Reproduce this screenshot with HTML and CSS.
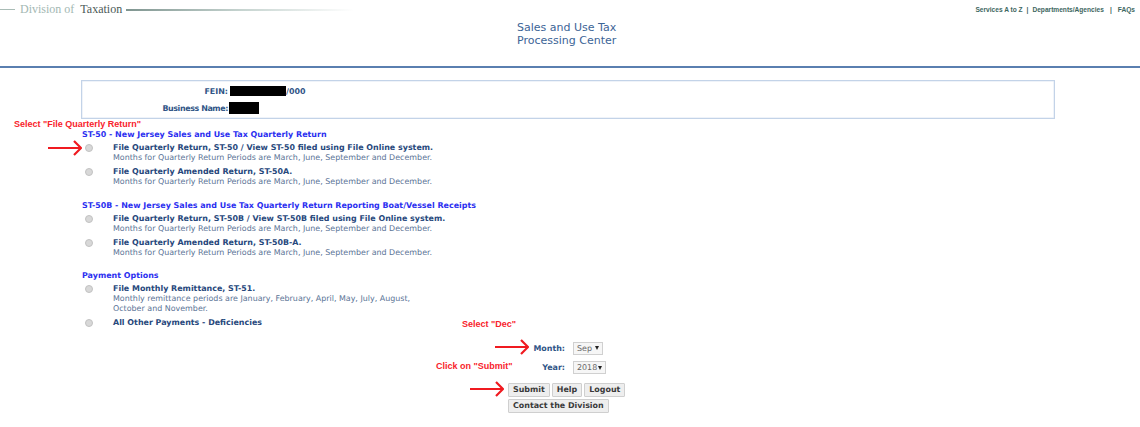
FILE: index.html
```html
<!DOCTYPE html>
<html lang="en">
<head>
<meta charset="utf-8">
<title>Sales and Use Tax Processing Center</title>
<link rel="stylesheet" href="styles.css">
</head>
<body>
<header class="site-header">
  <div class="logo">
    <span class="logo-dash"></span>
    <span class="logo-light">Division of</span>
    <span class="logo-dark">Taxation</span>
    <span class="logo-rule"></span>
  </div>
  <div class="app-title">Sales and Use Tax<br>Processing Center</div>
  <nav class="top-links">
    <span>Services A to Z</span><span class="sep-a">|</span><span>Departments/Agencies</span><span class="sep-b">|</span><span>FAQs</span>
  </nav>
</header>

<main class="page">
  <section class="identity">
    <div class="id-row id-row-fein"><span class="id-label">FEIN:</span><span class="redact redact-fein"></span><span class="id-value">/000</span></div>
    <div class="id-row"><span class="id-label id-label-name">Business Name:</span><span class="redact redact-name"></span></div>
  </section>

  <section class="group group-first">
    <h2>ST-50 - New Jersey Sales and Use Tax Quarterly Return</h2>
    <div class="option"><span class="radio"></span><div><strong>File Quarterly Return, ST-50 / View ST-50 filed using File Online system.</strong><p>Months for Quarterly Return Periods are March, June, September and December.</p></div></div>
    <div class="option"><span class="radio"></span><div><strong>File Quarterly Amended Return, ST-50A.</strong><p>Months for Quarterly Return Periods are March, June, September and December.</p></div></div>
  </section>

  <section class="group">
    <h2>ST-50B - New Jersey Sales and Use Tax Quarterly Return Reporting Boat/Vessel Receipts</h2>
    <div class="option"><span class="radio"></span><div><strong>File Quarterly Return, ST-50B / View ST-50B filed using File Online system.</strong><p>Months for Quarterly Return Periods are March, June, September and December.</p></div></div>
    <div class="option"><span class="radio"></span><div><strong>File Quarterly Amended Return, ST-50B-A.</strong><p>Months for Quarterly Return Periods are March, June, September and December.</p></div></div>
  </section>

  <section class="group">
    <h2>Payment Options</h2>
    <div class="option"><span class="radio"></span><div><strong>File Monthly Remittance, ST-51.</strong><p>Monthly remittance periods are January, February, April, May, July, August,<br>October and November.</p></div></div>
    <div class="option"><span class="radio"></span><div><strong>All Other Payments - Deficiencies</strong></div></div>
  </section>

  <section class="controls">
    <div class="field"><span class="field-label">Month:</span><span class="select select-month">Sep<i></i></span></div>
    <div class="field"><span class="field-label">Year:</span><span class="select select-year">2018<i></i></span></div>
    <div class="buttons">
      <button type="button">Submit</button><button type="button">Help</button><button type="button">Logout</button>
    </div>
    <div class="buttons buttons-second">
      <button type="button">Contact the Division</button>
    </div>
  </section>
</main>

<div class="note note-quarterly">Select "File Quarterly Return"</div>
<div class="note note-dec">Select "Dec"</div>
<div class="note note-submit">Click on "Submit"</div>

<svg class="arrow arrow-radio" viewBox="0 0 34 16"><path d="M0 8H32M26 1L33 8L26 15"/></svg>
<svg class="arrow arrow-month" viewBox="0 0 34 16"><path d="M0 8H32M26 1L33 8L26 15"/></svg>
<svg class="arrow arrow-submit" viewBox="0 0 34 16"><path d="M0 8H32M26 1L33 8L26 15"/></svg>
</body>
</html>
```
FILE: styles.css
```css
* { box-sizing: border-box; }
html, body { margin: 0; padding: 0; background: #fff; }
body {
  position: relative;
  width: 1140px;
  height: 427px;
  overflow: hidden;
  font-family: "DejaVu Sans", Verdana, sans-serif;
  font-size: 7.95px;
  color: #2f5486;
}

.site-header {
  display: grid;
  grid-template-columns: 1fr 1fr;
  height: 68px;
  border-bottom: 2px solid #5a7fb0;
}
.logo {
  display: flex;
  align-items: center;
  height: 19px;
  font-family: "Liberation Serif", serif;
  font-size: 12px;
  white-space: nowrap;
}
.logo-dash { width: 15px; height: 1px; background: #a9bcb6; margin-right: 5px; }
.logo-light { color: #a3b8b3; margin-right: 6px; }
.logo-dark { color: #4c5a57; margin-right: 4px; }
.logo-rule {
  width: 228px;
  height: 2px;
  background: linear-gradient(to right, #7f9590, #c5d3cf 50%, #fff);
}
.app-title {
  position: absolute;
  left: 517px;
  top: 20.5px;
  font-size: 11px;
  line-height: 13.5px;
  color: #3c6496;
}
.top-links {
  grid-column: 2;
  display: flex;
  justify-content: flex-end;
  padding: 5px 5px 0 0;
  font-family: "Liberation Sans", Arial, sans-serif;
  font-size: 6.6px;
  line-height: 9px;
  font-weight: 700;
  color: #3d6660;
}
.sep-a { margin: 0 4px; }
.sep-b { margin: 0 6px; }

.identity {
  width: 974px;
  height: 39px;
  margin: 12px 0 0 81px;
  border: 1px solid #c3d3e8;
  box-shadow: inset 0 0 0 0.5px #e0e8f3;
  padding-top: 5px;
  font-weight: 700;
}
.id-row { display: flex; align-items: center; height: 10px; }
.id-row-fein { margin-bottom: 7px; }
.id-label { width: 146px; text-align: right; }
.id-label-name { letter-spacing: -0.4px; }
.id-value { color: #2f5486; }
.redact { display: block; background: #000; margin-left: 2px; }
.redact-fein { width: 56px; height: 10px; }
.redact-name { width: 30px; height: 12px; margin-left: 1px; }

.page { display: block; }
.group { margin: 0 0 0 82px; padding-top: 9.5px; }
.group-first { padding-top: 11px; }
.group h2 {
  margin: 0 0 3px;
  font-size: 7.95px;
  line-height: 10px;
  font-weight: 700;
  color: #2b2ff0;
}
.option {
  display: grid;
  grid-template-columns: 31px 1fr;
  margin-bottom: 4px;
}
.option strong { display: block; line-height: 10px; color: #27487c; }
.option p { margin: 0; line-height: 10px; color: #5a7396; }
.radio {
  display: block;
  width: 8px;
  height: 8px;
  margin: 1px 0 0 3px;
  border-radius: 50%;
  background: #d8d8d8;
  border: 1px solid #c2c2c2;
}

.controls { padding: 9px 0 0 508px; }
.field { display: flex; align-items: center; height: 14px; margin-bottom: 5.5px; }
.field-label {
  width: 57px;
  text-align: right;
  margin-right: 8px;
  font-weight: 700;
}
.select {
  display: flex;
  align-items: center;
  justify-content: space-between;
  height: 13px;
  padding: 0 3px;
  border: 1px solid #d0d0d0;
  background: #f6f6f6;
  color: #666;
}
.select i {
  display: block;
  width: 0;
  height: 0;
  border-left: 2.5px solid transparent;
  border-right: 2.5px solid transparent;
  border-top: 4px solid #222;
}
.select-month { width: 30px; }
.select-year { width: 33px; }

.buttons { display: flex; gap: 2px; margin-top: 8px; }
.buttons-second { margin-top: 2px; }
button {
  height: 14px;
  padding: 0 4px;
  border: 1px solid #cfcfcf;
  border-radius: 1px;
  background: #eeeeee;
  font-family: "DejaVu Sans", Verdana, sans-serif;
  font-size: 7.95px;
  font-weight: 700;
  line-height: 12px;
  color: #3a3a3a;
}

.note {
  position: absolute;
  font-family: "Liberation Sans", Arial, sans-serif;
  font-size: 9px;
  line-height: 10px;
  font-weight: 700;
  color: #f8232b;
  white-space: nowrap;
}
.note-quarterly { left: 14px; top: 119px; }
.note-dec { left: 462px; top: 319px; }
.note-submit { left: 436px; top: 361px; }

.arrow {
  position: absolute;
  width: 34px;
  height: 16px;
  fill: none;
  stroke: #f01a20;
  stroke-width: 2.2;
}
.arrow-radio { left: 48px; top: 140px; }
.arrow-month { left: 495px; top: 339px; }
.arrow-submit { left: 470px; top: 381px; }
```
